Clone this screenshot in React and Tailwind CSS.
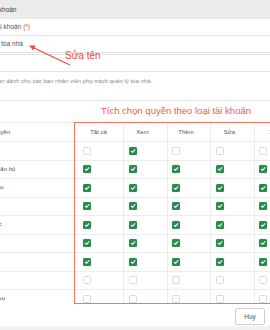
import React from "react";

const rows = [
  { name: "Dân cư", v: [0, 1, 0, 0, 0] },
  { name: "Quản lý căn hộ", v: [1, 1, 1, 1, 1] },
  { name: "Thông báo", v: [1, 1, 1, 1, 1] },
  { name: "Cư dân", v: [1, 1, 1, 1, 1] },
  { name: "Công việc", v: [1, 1, 1, 1, 1] },
  { name: "Tài sản", v: [1, 1, 1, 1, 1] },
  { name: "Hóa đơn", v: [1, 1, 1, 1, 1] },
  { name: "Xe", v: [0, 0, 0, 0, 0] },
  { name: "Gói dịch vụ", v: [0, 0, 0, 0, 0] },
];

const cols = ["Tất cả", "Xem", "Thêm", "Sửa", "Xóa"];
const pads = ["pl-[9px]", "pl-[5px]", "pl-[4px]", "pl-[5px]", "pl-[4px]"];

function Box({ on }) {
  if (on) {
    return (
      <span className="flex h-[8px] w-[8px] items-center justify-center rounded-[1.5px] bg-[#2b8a4e] shadow-[0_0_1px_rgba(0,0,0,0.3)]">
        <svg width="6" height="6" viewBox="0 0 10 10">
          <path d="M2 5.4 L4.2 7.4 L8.2 2.8" stroke="white" strokeWidth="1.7" fill="none" strokeLinecap="round" strokeLinejoin="round" />
        </svg>
      </span>
    );
  }
  return <span className="block h-[8px] w-[8px] rounded-[1.5px] border border-[#dadada] bg-white" />;
}

export default function App() {
  return (
    <div
      className="relative h-[330px] w-[270px] overflow-hidden bg-white text-[#555]"
      style={{ fontFamily: '"Liberation Sans", Arial, sans-serif' }}
    >
      <div className="-ml-[30px] flex w-[330px] flex-col">
        {/* header */}
        <div className="flex h-[19px] items-center bg-[#ebebeb] pl-[6px] text-[6.5px] text-[#444] whitespace-nowrap">
          Loại tài khoản
        </div>
        {/* label */}
        <div className="flex h-[16px] items-center text-[6.5px] text-[#555] whitespace-nowrap">
          Tên loại tài khoản&nbsp;<span className="text-[#e5533f]">(*)</span>
        </div>
        {/* input */}
        <div className="flex h-[17.5px] items-center border border-[#e2e2e2] pl-[6px] text-[6.5px] text-[#555] whitespace-nowrap">
          Quản lý tòa nhà
        </div>
        <div className="mt-px h-[18px] border border-[#e2e2e2]" />
        {/* description */}
        <div className="flex h-[29.5px] items-start border-b border-[#e6e6e6] pt-[5.5px] text-[6px] text-[#8c8c8c] whitespace-nowrap">
          <span className="-ml-[3px]">Loại tài khoản dành cho các bạn nhân viên phụ trách quản lý tòa nhà.</span>
        </div>
        <div className="h-[21px]" />
        {/* table */}
        <div className="h-[182px] overflow-hidden">
          <div className="grid grid-cols-[104px_49px_44px_43px_44px_46px] border-t border-[#ececec] text-[6px] text-[#555]">
            <div className="flex h-[19px] items-center border-b border-[#ececec] pl-[6px] whitespace-nowrap">Nhóm quyền</div>
            {cols.map((c, i) => (
              <div
                key={c}
                className={`flex h-[19px] items-center justify-center border-b border-[#ececec] whitespace-nowrap ${i === 0 ? "" : "border-l pr-[6px]"}`}
              >
                {c}
              </div>
            ))}
            {rows.map((r) => (
              <React.Fragment key={r.name}>
                <div className="flex h-[18.5px] items-center overflow-hidden border-b border-[#ececec] pl-[5px] whitespace-nowrap">
                  {r.name}
                </div>
                {r.v.map((on, i) => (
                  <div
                    key={i}
                    className={`flex h-[18.5px] items-center border-b border-[#ececec] ${pads[i]} ${i === 0 ? "" : "border-l"}`}
                  >
                    <Box on={on} />
                  </div>
                ))}
              </React.Fragment>
            ))}
          </div>
        </div>
        {/* footer */}
        <div className="flex h-[22px] items-start justify-end pt-[4px]">
          <button className="flex h-[17px] w-[30px] items-center justify-center rounded-[2px] border border-[#cfcfcf] bg-white text-[6.5px] text-[#555]">
            Huỷ
          </button>
          <button className="ml-[6px] flex h-[17px] w-[29px] items-center justify-center rounded-[2px] bg-[#2b8a4e] text-[6.5px] text-white">
            Lưu
          </button>
        </div>
        <div className="h-[10px] bg-[#f1f1f1]" />
      </div>

      {/* annotations */}
      <div className="absolute left-[65px] top-[49px] text-[10px] leading-[14px] text-[#f2483a] whitespace-nowrap">
        Sửa tên
      </div>
      <svg className="absolute left-0 top-0" width="270" height="330" style={{ pointerEvents: "none" }}>
        <line x1="70" y1="65" x2="33" y2="47.5" stroke="#f2483a" strokeWidth="1.2" />
        <polygon points="29,45.5 35.5,45.6 33.3,50.6" fill="#f2483a" />
      </svg>
      <div className="absolute left-[101px] top-[104px] text-[9.5px] leading-[14px] text-[#f5574a] whitespace-nowrap">
        Tích chọn quyền theo loại tài khoản
      </div>
      <div className="absolute left-[74px] top-[122px] h-[181.5px] w-[240px] border-[1.5px] border-[#f5735f]" />
    </div>
  );
}
